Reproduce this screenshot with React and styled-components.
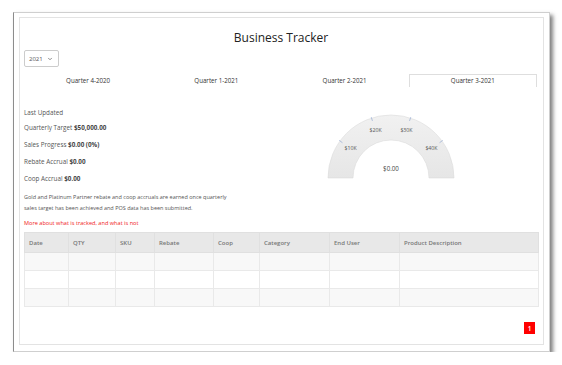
import React from 'react'
import styled, { createGlobalStyle } from 'styled-components'
import { ChevronDown } from 'lucide-react'

const GlobalStyle = createGlobalStyle`
  html, body {
    margin: 0;
    padding: 0;
    background: #ffffff;
    font-family: "Open Sans", "Liberation Sans", sans-serif;
  }
`

const quarters = ['Quarter 4-2020', 'Quarter 1-2021', 'Quarter 2-2021', 'Quarter 3-2021']

const columns = [
  { label: 'Date', width: 44 },
  { label: 'QTY', width: 47 },
  { label: 'SKU', width: 39 },
  { label: 'Rebate', width: 59 },
  { label: 'Coop', width: 46 },
  { label: 'Category', width: 70 },
  { label: 'End User', width: 70 },
  { label: 'Product Description', width: 139 },
]

const gaugeLabels = [
  { text: '$10K', angle: 144 },
  { text: '$20K', angle: 108 },
  { text: '$30K', angle: 72 },
  { text: '$40K', angle: 36 },
]

const Gauge = () => {
  const cx = 65
  const cy = 69
  const rOut = 63
  const rIn = 38
  const pt = (r, a) => {
    const rad = (a * Math.PI) / 180
    return [cx + r * Math.cos(rad), cy - r * Math.sin(rad)]
  }
  return (
    <GaugeSvg width="130" height="72" viewBox="0 0 130 72">
      <defs>
        <linearGradient id="ring" x1="0" y1="0" x2="0" y2="1">
          <stop offset="0" stopColor="#f1f1f1" />
          <stop offset="1" stopColor="#e6e6e6" />
        </linearGradient>
      </defs>
      <path
        d={`M ${cx - rOut} ${cy} A ${rOut} ${rOut} 0 0 1 ${cx + rOut} ${cy} L ${cx + rIn} ${cy} A ${rIn} ${rIn} 0 0 0 ${cx - rIn} ${cy} Z`}
        fill="url(#ring)"
        stroke="#dcdcdc"
        strokeWidth="0.6"
      />
      {gaugeLabels.map((g) => {
        const [x1, y1] = pt(rOut - 3, g.angle)
        const [x2, y2] = pt(rOut + 1, g.angle)
        const [lx, ly] = pt(50, g.angle)
        return (
          <g key={g.text}>
            <line x1={x1} y1={y1} x2={x2} y2={y2} stroke="#9fb3d6" strokeWidth="0.8" />
            <text x={lx} y={ly + 1.8} textAnchor="middle" fontSize="5.2" fill="#555">
              {g.text}
            </text>
          </g>
        )
      })}
      <text x={cx} y={62} textAnchor="middle" fontSize="6.2" fill="#444">
        $0.00
      </text>
    </GaugeSvg>
  )
}

export default function App() {
  return (
    <Page>
      <GlobalStyle />
      <Frame>
        <Panel>
          <Title>Business Tracker</Title>
          <YearSelect>
            <span>2021</span>
            <ChevronDown size={6} strokeWidth={3} color="#666" />
          </YearSelect>
          <Tabs>
            {quarters.map((q, i) => (
              <Tab key={q} active={i === quarters.length - 1}>{q}</Tab>
            ))}
          </Tabs>
          <Summary>
            <InfoCol>
              <Updated>Last Updated</Updated>
              <InfoLine>Quarterly Target <b>$50,000.00</b></InfoLine>
              <InfoLine>Sales Progress <b>$0.00 (0%)</b></InfoLine>
              <InfoLine>Rebate Accrual <b>$0.00</b></InfoLine>
              <InfoLine>Coop Accrual <b>$0.00</b></InfoLine>
            </InfoCol>
            <Gauge />
          </Summary>
          <Note>
            Gold and Platinum Partner rebate and coop accruals are earned once quarterly
            <br />
            sales target has been achieved and POS data has been submitted.
          </Note>
          <MoreLink>More about what is tracked, and what is not</MoreLink>
          <Table>
            <colgroup>
              {columns.map((c) => (
                <col key={c.label} style={{ width: c.width }} />
              ))}
            </colgroup>
            <thead>
              <tr>
                {columns.map((c) => (
                  <Th key={c.label}>{c.label}</Th>
                ))}
              </tr>
            </thead>
            <tbody>
              {[0, 1, 2].map((r) => (
                <Row key={r} striped={r % 2 === 0}>
                  {columns.map((c) => (
                    <Td key={c.label} />
                  ))}
                </Row>
              ))}
            </tbody>
          </Table>
          <Pager>
            <PageBtn>1</PageBtn>
          </Pager>
        </Panel>
      </Frame>
    </Page>
  )
}

const Page = styled.div`
  padding: 12px 0 0 13px;
`

const Frame = styled.div`
  width: 537px;
  height: 340px;
  box-sizing: border-box;
  border: 1px solid #cfcfcf;
  border-left-color: #8c8c8c;
  box-shadow: 3px 3px 4px rgba(0, 0, 0, 0.5);
  padding: 4px 5px 6px 5px;
  background: #fff;
`

const Panel = styled.div`
  height: 100%;
  box-sizing: border-box;
  border: 1px solid #e3e3e3;
  padding: 0 5px 0 4px;
  display: flex;
  flex-direction: column;
`

const Title = styled.h1`
  margin: 12px 0 0;
  font-size: 12px;
  line-height: 16px;
  font-weight: 400;
  color: #222;
  text-align: center;
`

const YearSelect = styled.div`
  margin-top: 4px;
  width: 35px;
  height: 17px;
  box-sizing: border-box;
  border: 1px solid #cccccc;
  border-radius: 2px;
  display: flex;
  align-items: center;
  justify-content: space-between;
  padding: 0 5px 0 4px;
  font-size: 6px;
  color: #555;
`

const Tabs = styled.div`
  margin-top: 7px;
  display: grid;
  grid-template-columns: repeat(4, 1fr);
  width: 513px;
  border-bottom: 1px solid #e6e6e6;
`

const Tab = styled.div`
  height: 13px;
  line-height: 11px;
  margin-bottom: -1px;
  box-sizing: border-box;
  border: 1px solid ${({ active }) => (active ? '#dedede' : 'transparent')};
  border-bottom: none;
  background: #fff;
  text-align: center;
  font-size: 6.2px;
  color: #333;
`

const Summary = styled.div`
  margin-top: 21px;
  display: flex;
  align-items: flex-start;
`

const InfoCol = styled.div`
  width: 302px;
  font-size: 6.3px;
  color: #555;

  b {
    font-weight: 700;
    color: #444;
  }
`

const Updated = styled.div`
  line-height: 10px;
  margin-bottom: 5px;
`

const InfoLine = styled.div`
  line-height: 10px;
  margin-bottom: 7px;
`

const GaugeSvg = styled.svg`
  display: block;
  margin-top: 1px;
  font-family: "Open Sans", "Liberation Sans", sans-serif;
`

const Note = styled.p`
  margin: 1px 0 0;
  font-size: 5.5px;
  line-height: 11px;
  color: #555;
`

const MoreLink = styled.a`
  display: block;
  margin-top: 4px;
  font-size: 5.6px;
  line-height: 10px;
  color: #f01818;
  text-decoration: none;
`

const Table = styled.table`
  margin-top: 4px;
  width: 514px;
  border-collapse: collapse;
  table-layout: fixed;
`

const Th = styled.th`
  height: 19px;
  padding: 0 4px;
  background: #e8e8e8;
  border: 1px solid #e0e0e0;
  text-align: left;
  font-size: 6px;
  font-weight: 600;
  color: #777;
`

const Row = styled.tr`
  background: ${({ striped }) => (striped ? '#f8f8f8' : '#ffffff')};
`

const Td = styled.td`
  height: 17px;
  padding: 0;
  border: 1px solid #e9e9e9;
`

const Pager = styled.div`
  margin-top: 15px;
  width: 511px;
  display: flex;
  justify-content: flex-end;
`

const PageBtn = styled.span`
  width: 11px;
  height: 12px;
  background: #ff0000;
  color: #fff;
  font-size: 6.5px;
  font-weight: 600;
  display: flex;
  align-items: center;
  justify-content: center;
`
